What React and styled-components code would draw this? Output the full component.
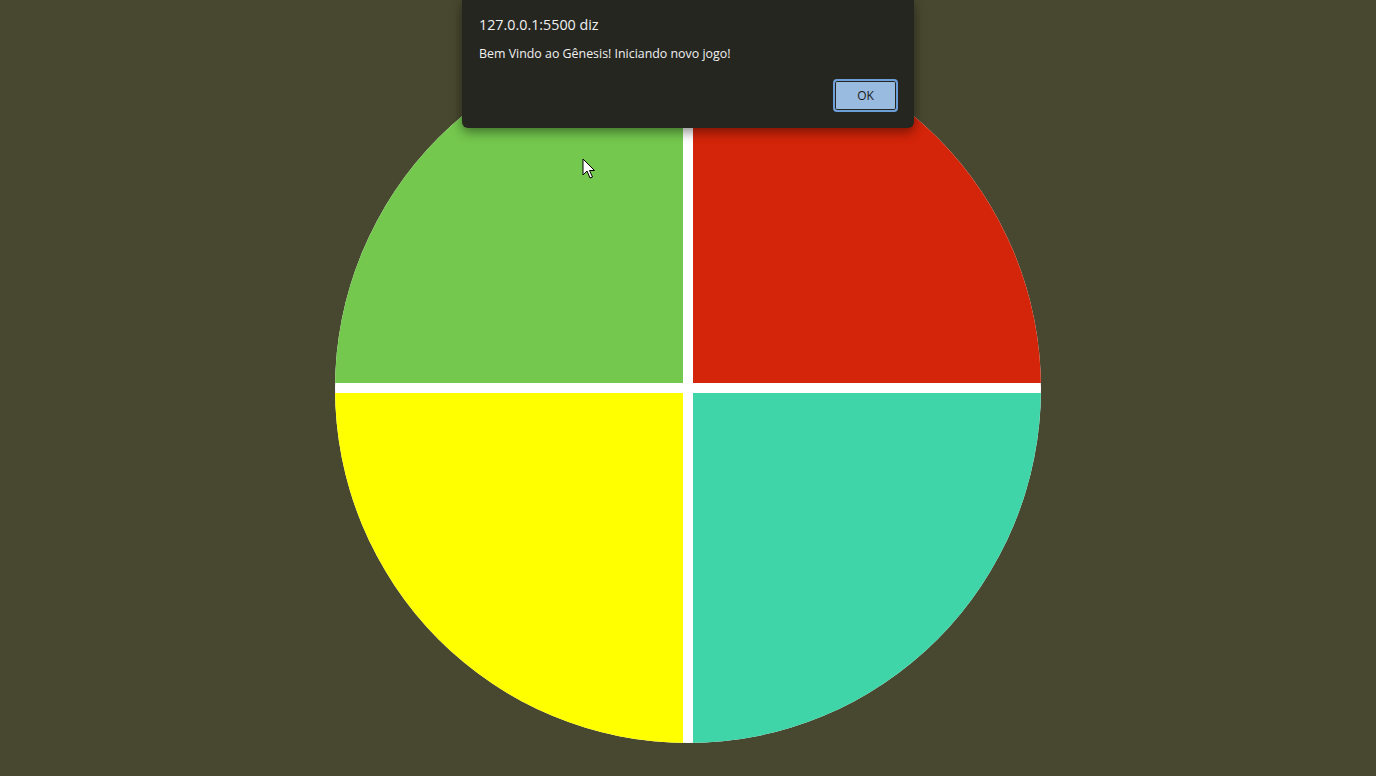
import React from 'react';
import styled, { createGlobalStyle } from 'styled-components';

const GlobalStyle = createGlobalStyle`
  html, body {
    margin: 0;
    padding: 0;
    height: 100%;
    background: #48472f;
    overflow: hidden;
  }
  #root {
    height: 100%;
  }
`;

const Page = styled.div`
  position: relative;
  width: 100%;
  height: 776px;
  display: flex;
  justify-content: center;
  padding-top: 34px;
  box-sizing: border-box;
`;

const Board = styled.div`
  width: 706px;
  height: 709px;
  border-radius: 50%;
  overflow: hidden;
  background: #ffffff;
  display: grid;
  grid-template-columns: 348px 348px;
  grid-template-rows: 349px 350px;
  gap: 10px;
`;

const Pad = styled.div`
  background: ${(p) => p.color};
`;

const Dialog = styled.div`
  position: absolute;
  top: 0;
  left: 462px;
  width: 452px;
  height: 128px;
  background: #262621;
  box-shadow: 0 4px 12px rgba(0, 0, 0, 0.45);
  border-radius: 0 0 6px 6px;
  box-sizing: border-box;
  padding: 15px 16px 0 17px;
  font-family: "Open Sans", "Noto Sans", sans-serif;
  color: #f0f0f0;
  display: flex;
  flex-direction: column;
`;

const Title = styled.div`
  font-size: 14.3px;
  line-height: 20px;
`;

const Message = styled.div`
  margin-top: 10px;
  font-size: 12.4px;
  line-height: 17px;
`;

const Actions = styled.div`
  display: flex;
  justify-content: flex-end;
  margin-top: 17px;
`;

const OkButton = styled.button`
  width: 65px;
  height: 33px;
  background: #99bbe0;
  border: 2px solid #6c9fd9;
  box-shadow: inset 0 0 0 1px #26261f;
  border-radius: 4px;
  font-family: "Open Sans", "Noto Sans", sans-serif;
  font-size: 12px;
  color: #1a1a1a;
  padding: 0;
`;

const Cursor = styled.svg`
  position: absolute;
  left: 582px;
  top: 158px;
`;

export default function App() {
  return (
    <>
      <GlobalStyle />
      <Page>
        <Board>
          <Pad color="#74c84e" />
          <Pad color="#d42409" />
          <Pad color="#ffff00" />
          <Pad color="#40d4a9" />
        </Board>
        <Cursor width="14" height="22" viewBox="0 0 14 22">
          <path d="M1 1 L1 17 L5 13 L8 20 L10.5 19 L7.5 12.5 L12.5 12.5 Z" fill="#ffffff" stroke="#000000" strokeWidth="1" strokeLinejoin="round" />
        </Cursor>
        <Dialog>
          <Title>127.0.0.1:5500 diz</Title>
          <Message>Bem Vindo ao Gênesis! Iniciando novo jogo!</Message>
          <Actions>
            <OkButton>OK</OkButton>
          </Actions>
        </Dialog>
      </Page>
    </>
  );
}
